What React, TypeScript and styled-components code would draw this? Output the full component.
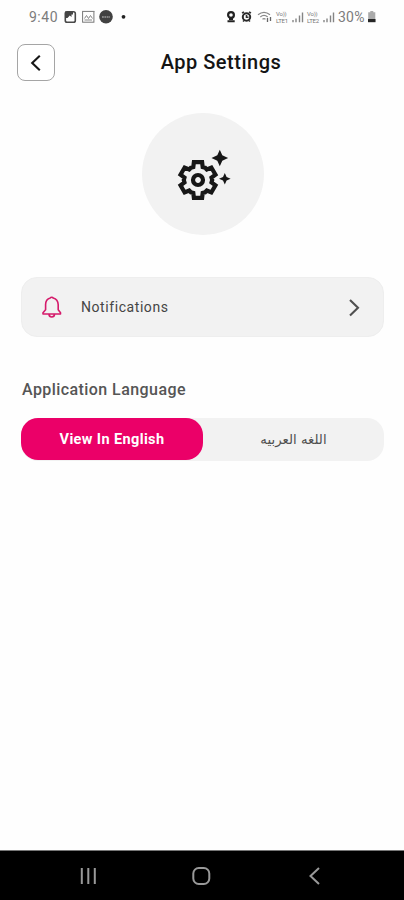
import React from "react";
import styled, { createGlobalStyle } from "styled-components";

const GlobalStyle = createGlobalStyle`
  html, body { margin: 0; padding: 0; background: #fefefe; }
  * { box-sizing: border-box; }
  button { font: inherit; padding: 0; border: 0; }
`;

const Screen = styled.div`
  width: 404px;
  height: 900px;
  display: flex;
  flex-direction: column;
  overflow: hidden;
  background: #fefefe;
  font-family: Roboto, sans-serif;
`;

const StatusBar = styled.div`
  height: 34px;
  padding: 0 27px 0 29px;
  display: flex;
  align-items: center;
  justify-content: space-between;
  color: #7c7c7c;
`;

const StatusGroup = styled.div`
  display: flex;
  align-items: center;
  svg { display: block; flex: none; }
`;

const StatusText = styled.span<{ $width: number; $spacing: number }>`
  width: ${(p) => p.$width}px;
  font-size: 14px;
  line-height: 18px;
  letter-spacing: ${(p) => p.$spacing}px;
  white-space: nowrap;
`;

const Volte = styled.span`
  width: 16px;
  display: flex;
  flex-direction: column;
  font-size: 6px;
  line-height: 7px;
  letter-spacing: -0.2px;
  color: #777;
  white-space: nowrap;
`;

const Header = styled.header`
  height: 57px;
  padding: 10px 17px 0;
  display: grid;
  grid-template-columns: 38px 1fr 38px;
`;

const BackButton = styled.button`
  width: 38px;
  height: 37px;
  display: flex;
  align-items: center;
  justify-content: center;
  border: 1px solid #a5a5a5;
  border-radius: 8px;
  background: #fff;
`;

const Title = styled.h1`
  margin: 0;
  padding-left: 38px;
  text-align: center;
  font-size: 20px;
  line-height: 37px;
  font-weight: 500;
  letter-spacing: 0.5px;
  color: #141414;
`;

const Hero = styled.div`
  width: 122px;
  height: 122px;
  margin: 22px auto 0 141.5px;
  border-radius: 50%;
  background: #f2f2f2;
`;

const Content = styled.main`
  flex: 1;
  padding: 42px 20px 0 21px;
`;

const SettingRow = styled.button`
  width: 363px;
  height: 60px;
  padding: 0 21px 0 19px;
  display: flex;
  align-items: center;
  border: 1px solid #eeeeee;
  border-radius: 16px;
  background: #f2f2f2;
`;

const RowLabel = styled.span`
  flex: 1;
  margin-left: 18px;
  text-align: left;
  font-size: 14px;
  letter-spacing: 0.57px;
  color: #454545;
`;

const SectionTitle = styled.h2`
  margin: 42px 0 18px 1px;
  font-size: 16px;
  line-height: 21px;
  font-weight: 500;
  letter-spacing: 0.43px;
  color: #555;
`;

const Segmented = styled.div`
  width: 363px;
  height: 43px;
  display: flex;
  border-radius: 17px;
  background: #f2f2f2;
`;

const Segment = styled.button<{ $active?: boolean }>`
  width: ${(p) => (p.$active ? 182 : 181)}px;
  height: ${(p) => (p.$active ? 42 : 43)}px;
  border-radius: 17px;
  background: ${(p) => (p.$active ? "#eb0068" : "transparent")};
  color: ${(p) => (p.$active ? "#fff" : "#505050")};
  font-family: ${(p) => (p.$active ? "Roboto, sans-serif" : '"DejaVu Sans", sans-serif')};
  font-size: ${(p) => (p.$active ? 14.5 : 13.3)}px;
  font-weight: ${(p) => (p.$active ? 700 : 400)};
  letter-spacing: ${(p) => (p.$active ? "0.38px" : "normal")};
`;

const NavBar = styled.nav`
  height: 50px;
  flex: none;
  padding: 0 83px 0 80px;
  display: flex;
  align-items: center;
  justify-content: space-between;
  border-top: 1px solid #777;
  background: #000;
`;

const gearPoints = [0, 60, 120, 180, 240, 300]
  .flatMap((deg) => {
    const a = (deg * Math.PI) / 180;
    const tooth = [[-4.7, -12.9], [-4.1, -17.8], [4.1, -17.8], [4.7, -12.9], [7.1, -12.3]];
    return tooth.map(
      ([x, y]) =>
        `${(x * Math.cos(a) - y * Math.sin(a)).toFixed(2)},${(x * Math.sin(a) + y * Math.cos(a)).toFixed(2)}`
    );
  })
  .join(" ");

const SettingsArt = () => (
  <svg width="122" height="122" viewBox="141.5 113 122 122" aria-hidden="true">
    <g transform="translate(197.5 180)" fill="none" stroke="#171717" strokeWidth="4.2">
      <polygon points={gearPoints} strokeLinejoin="miter" />
      <circle r="5" strokeWidth="4.2" />
    </g>
    <path fill="#171717" d="M219.3 149.7l2.5 5.6 5.8 2.7-5.8 2.7-2.5 5.6-2.5-5.6-5.8-2.7 5.8-2.7zM224.3 173l1.8 3.9 4 1.8-4 1.8-1.8 4-1.8-4-4-1.8 4-1.8z" />
  </svg>
);

const NoticeIcons = () => (
  <svg width="64" height="18" viewBox="0 0 64 18" aria-hidden="true">
    <rect x="1.3" y="3.7" width="10" height="10.5" rx="1.8" fill="none" stroke="#484848" strokeWidth="1.6" />
    <path d="M1 3.5h8v3H7.5V9L5.8 7.5 3.5 10H1z" fill="#444" />
    <rect x="18.6" y="3.5" width="11.3" height="10.7" fill="none" stroke="#777" />
    <path d="M18 3.4h12.4M20.5 10.5l2-3 2 3 2-3 2 3M20.5 12h7.5" fill="none" stroke="#888" />
    <circle cx="42" cy="8.8" r="6.8" fill="#414141" />
    <path d="M38 9h8" stroke="#999" strokeWidth="1.5" strokeDasharray="1.8 .6" />
    <circle cx="59.5" cy="8.8" r="1.9" fill="#222" />
  </svg>
);

const SystemIcons = () => (
  <svg width="50" height="18" viewBox="0 0 50 18" aria-hidden="true">
    <circle cx="5" cy="7" r="2.9" fill="none" stroke="#222" strokeWidth="2.2" />
    <path d="M1.5 13.2h7.2M3 11h4" stroke="#222" strokeWidth="1.9" />
    <circle cx="20.5" cy="9" r="3.7" fill="none" stroke="#292929" strokeWidth="2" />
    <path d="M16 5l2-1M23 4l2 1M17 13.5l1-1M24 13.5l-1-1M20.5 7v2.2h2" fill="none" stroke="#333" strokeWidth="1.6" />
    <path d="M32 6.8q6-5 12 0M34.3 9q3.7-3.1 7.4 0M36.5 11.2q1.5-1.2 3 0" fill="none" stroke="#888" strokeWidth="1.2" />
    <path d="M41.5 10v4m3-5v4" stroke="#666" strokeWidth="1.3" />
  </svg>
);

const Signal = () => (
  <svg width="15" height="18" viewBox="0 0 15 18" aria-hidden="true">
    <path d="M1 12v2.2M4 10.5v3.7M7.5 7.5v6.7M10.5 4.5v9.7" stroke="#858585" strokeWidth="1.4" />
  </svg>
);

const Battery = () => (
  <svg width="10" height="18" viewBox="0 0 10 18" aria-hidden="true">
    <path d="M3.3 3h3v1.2h2V14H1.2V4.2h2.1z" fill="#aaa" />
    <path d="M1 11h7.5v3.2H1z" fill="#262626" />
  </svg>
);

const BellIcon = () => (
  <svg width="22" height="24" viewBox="0 0 22 24" fill="none" aria-hidden="true">
    <path d="M2 19h17.5v-1.2l-2.3-3V9.6C17 6 15 3.8 12.2 3 11.6 1.9 9.8 1.9 9.3 3 6.3 3.8 4.6 6.2 4.6 9.6v5.2L2 17.8zM8 19.4c.2 3.4 5.3 3.4 5.5 0" stroke="#d51b6b" strokeWidth="1.6" strokeLinejoin="round" />
  </svg>
);

export default function App() {
  return (
    <Screen>
      <GlobalStyle />
      <StatusBar>
        <StatusGroup>
          <StatusText $width={35} $spacing={0.5}>9:40</StatusText>
          <NoticeIcons />
        </StatusGroup>
        <StatusGroup>
          <SystemIcons />
          <Volte><span>Vo))</span><span>LTE1</span></Volte>
          <Signal />
          <Volte><span>Vo))</span><span>LTE2</span></Volte>
          <Signal />
          <StatusText $width={29} $spacing={0.2}>30%</StatusText>
          <Battery />
        </StatusGroup>
      </StatusBar>
      <Header>
        <BackButton aria-label="Back">
          <svg width="20" height="20" viewBox="0 0 20 20" fill="none" aria-hidden="true">
            <path d="M13.8 2.8L6.2 10l7.6 7.2" stroke="#171717" strokeWidth="2.1" />
          </svg>
        </BackButton>
        <Title>App Settings</Title>
      </Header>
      <Hero><SettingsArt /></Hero>
      <Content>
        <SettingRow>
          <BellIcon />
          <RowLabel>Notifications</RowLabel>
          <svg width="16" height="20" viewBox="0 0 16 20" fill="none" aria-hidden="true">
            <path d="M4 3l8 7.8-8 7.8" stroke="#505050" strokeWidth="2.1" />
          </svg>
        </SettingRow>
        <SectionTitle>Application Language</SectionTitle>
        <Segmented>
          <Segment $active>View In English</Segment>
          <Segment lang="ar" dir="rtl">اللغه العربيه</Segment>
        </Segmented>
      </Content>
      <NavBar>
        <svg width="17" height="18" viewBox="0 0 17 18" aria-hidden="true">
          <path d="M1.8 1v16M8.3 1v16M14.8 1v16" stroke="#999" strokeWidth="2" />
        </svg>
        <svg width="20" height="20" viewBox="0 0 20 20" aria-hidden="true">
          <rect x="1.3" y="2" width="16" height="16" rx="5.5" fill="none" stroke="#999" strokeWidth="2" />
        </svg>
        <svg width="14" height="20" viewBox="0 0 14 20" fill="none" aria-hidden="true">
          <path d="M12 2L3.5 10l8.5 8" stroke="#999" strokeWidth="2" />
        </svg>
      </NavBar>
    </Screen>
  );
}
